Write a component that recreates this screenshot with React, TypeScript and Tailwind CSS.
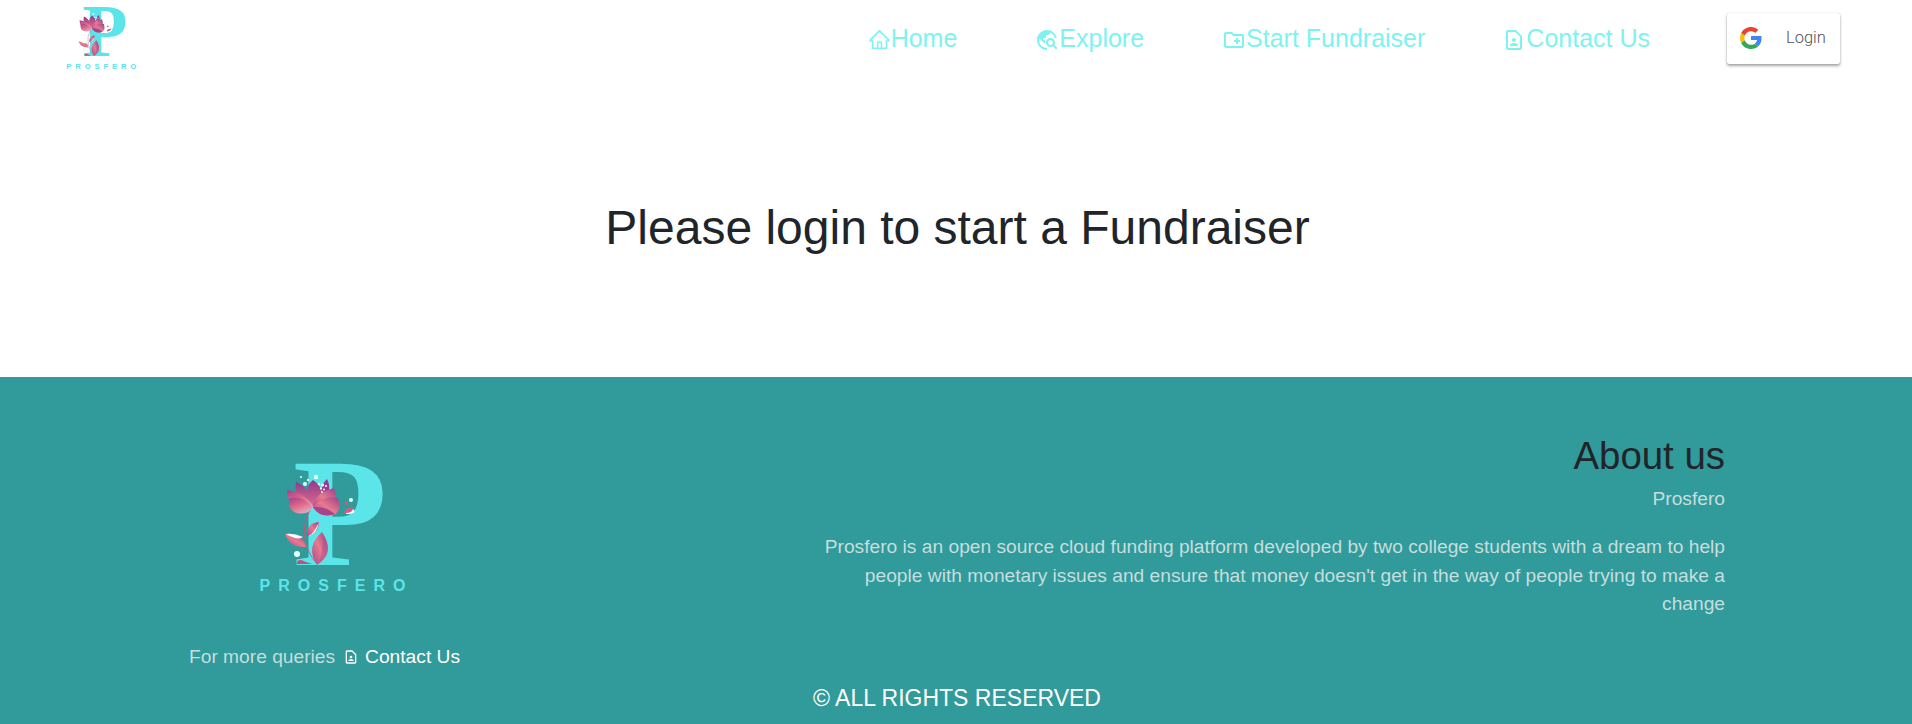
import { AiOutlineHome } from "react-icons/ai";
import { MdTravelExplore, MdOutlineCreateNewFolder, MdOutlineContactPage } from "react-icons/md";
import type { ReactNode } from "react";

function GoogleMark() {
  return (
    <svg viewBox="0 0 18 18" className="size-[22px]" fillRule="evenodd">
      <path d="M9 3.48c1.69 0 2.83.73 3.48 1.34l2.54-2.48C13.46.89 11.43 0 9 0 5.48 0 2.44 2.02.96 4.96l2.91 2.26C4.6 5.05 6.62 3.48 9 3.48z" fill="#EA4335" />
      <path d="M17.64 9.2c0-.74-.06-1.28-.19-1.84H9v3.34h4.96c-.1.83-.64 2.08-1.84 2.92l2.84 2.2c1.7-1.57 2.68-3.88 2.68-6.62z" fill="#4285F4" />
      <path d="M3.88 10.78A5.54 5.54 0 0 1 3.58 9c0-.62.11-1.22.29-1.78L.96 4.96A9.008 9.008 0 0 0 0 9c0 1.45.35 2.82.96 4.04l2.92-2.26z" fill="#FBBC05" />
      <path d="M9 18c2.43 0 4.47-.8 5.96-2.18l-2.84-2.2c-.76.53-1.78.9-3.12.9-2.38 0-4.4-1.57-5.12-3.74L.97 13.04C2.45 15.98 5.48 18 9 18z" fill="#34A853" />
    </svg>
  );
}

function Logo({ className }: { className: string }) {
  return (
    <svg viewBox="0 0 190 170" className={className} overflow="visible" aria-label="Prosfero">
      <defs>
        <linearGradient id="petalA" x1="0" y1="0" x2="0.6" y2="1">
          <stop offset="0" stopColor="#a83c8c" />
          <stop offset="0.6" stopColor="#e2708a" />
          <stop offset="1" stopColor="#dda9c4" />
        </linearGradient>
        <linearGradient id="petalB" x1="1" y1="0" x2="0" y2="1">
          <stop offset="0" stopColor="#9c3f8e" />
          <stop offset="0.5" stopColor="#e87a8c" />
          <stop offset="1" stopColor="#a8458f" />
        </linearGradient>
        <linearGradient id="petalC" x1="0" y1="0" x2="0" y2="1">
          <stop offset="0" stopColor="#8f3a8c" />
          <stop offset="1" stopColor="#e0708c" />
        </linearGradient>
      </defs>
      <text x="53" y="125" fontSize="154" textLength="94" lengthAdjust="spacingAndGlyphs" fill="#5ce5e8" className="font-['Liberation_Serif',serif] font-bold">P</text>
      <path d="M70 70Q62 85 65 100Q68 114 77 124" fill="none" stroke="#c4577c" strokeWidth="0.9" />
      <path d="M81 56Q81 44 87 39Q91 46 88 58Z" fill="#9b3c90" />
      <path d="M60 60Q54 52 56 42Q67 45 74 66Z" fill="url(#petalC)" />
      <path d="M72 67Q61 50 73 40Q88 50 76 68Z" fill="url(#petalC)" />
      <path d="M73 66Q76 52 94 48Q99 61 90 68L76 70Z" fill="url(#petalB)" />
      <path d="M73 66Q64 52 47 50Q48 66 60 70L73 68Z" fill="url(#petalA)" />
      <path d="M73 67Q60 54 49 59Q48 74 62 73.500Q70 73 73 67Z" fill="url(#petalA)" />
      <path d="M73 67Q82 55 98 58Q103 76 88 75.500Q78 75 73 67Z" fill="url(#petalB)" />
      <path d="M73 67Q86 66 95 74Q80 79 73 67Z" fill="#a8448e" />
      <path d="M67 96Q66 83 79 82Q79 93 67 96Z" fill="url(#petalB)" />
      <path d="M68 96Q77 94 79 82Q74 94 68 96Z" fill="#fff" />
      <path d="M66 107Q64 94 45 94Q50 108 66 107Z" fill="url(#petalB)" />
      <path d="M46 94Q58 101 63 97Q54 93 46 94Z" fill="#fff" />
      <path d="M77 125Q65 107 82 92Q96 113 77 125Z" fill="url(#petalB)" />
      <path d="M79 123Q84 110 82 93Q95 113 79 123Z" fill="#b14f92" opacity=".55" />
      <path d="M57 124Q57 117 66 122L72 124Z" fill="#c4507f" />
      <path d="M104 73Q105 67 114 68Q112 75 104 73Z" fill="#d35c82" />
      <path d="M106 73Q112 73 113 69Q118 74 106 74Z" fill="#fff" />
      <path d="M106 65Q102 62 107 61Q109 64 106 65Z" fill="#d9547f" />
      <g fill="#e8ffff">
        <circle cx="76" cy="37" r="2.2" />
        <circle cx="65" cy="44" r="2" />
        <circle cx="61" cy="37" r="1" />
        <circle cx="68" cy="40" r="1.2" />
        <circle cx="79" cy="44" r="1.3" />
        <circle cx="82.500" cy="45" r="1.6" />
        <circle cx="86" cy="46" r="1" />
        <circle cx="81" cy="48.500" r="1.1" />
        <circle cx="84" cy="49.500" r="1" />
        <circle cx="82" cy="52" r="1" />
        <circle cx="111" cy="60" r="2" />
        <circle cx="57" cy="114" r="3" />
      </g>
      <text x="19.500" y="151" fontSize="16" textLength="146" fill="#5ce5e8" className="font-['Liberation_Sans',sans-serif] font-bold">PROSFERO</text>
    </svg>
  );
}

function NavLink({ icon, children }: { icon: ReactNode; children: ReactNode }) {
  return (
    <a className="flex items-center text-[25px] leading-[38px] text-[#7df3f0]">
      <span className="pt-[3px]">{icon}</span>
      {children}
    </a>
  );
}

export default function App() {
  return (
    <div className="flex h-[724px] flex-col overflow-hidden bg-white font-['Liberation_Sans',Arial,sans-serif] text-[#212529]">
      <header className="flex h-[78px] items-center pl-[57px] pr-[72px]">
        <Logo className="-mt-[5px] h-[82px] w-[91px] shrink-0" />
        <nav className="-mt-[2px] ml-auto flex items-center">
          <div className="flex gap-[77px]">
            <div className="flex gap-[78px]">
              <NavLink icon={<AiOutlineHome className="size-[23px]" />}>Home</NavLink>
              <NavLink icon={<MdTravelExplore className="size-[24px]" />}>Explore</NavLink>
              <NavLink icon={<MdOutlineCreateNewFolder className="size-[24px]" />}>Start Fundraiser</NavLink>
            </div>
            <NavLink icon={<MdOutlineContactPage className="size-[24px]" />}>Contact Us</NavLink>
          </div>
          <button className="ml-[77px] flex h-[51px] w-[113px] items-center rounded-xs bg-white pl-[13px] shadow-[0_2px_3px_0_rgba(0,0,0,0.35),0_0_1px_0_rgba(0,0,0,0.3)]">
            <GoogleMark />
            <span className="ml-[24px] font-[Roboto,sans-serif] text-[16.5px] font-light text-[#555555]">Login</span>
          </button>
        </nav>
      </header>
      <main className="flex h-[299px] justify-center pl-[3px] pt-[121px]">
        <h1 className="text-[48px] leading-[58px]">Please login to start a Fundraiser</h1>
      </main>
      <footer className="flex flex-1 flex-col bg-[#319a9a] text-[19.2px] leading-[28.8px] text-[#c5dede]">
        <div className="flex h-[303px] justify-between pl-[189px] pr-[187px]">
          <div className="flex flex-col pt-[63px]">
            <Logo className="ml-[51px] h-[170px] w-[190px]" />
            <p className="mt-[33px] flex items-center">
              For more queries
              <MdOutlineContactPage className="ml-[8px] mr-[6px] size-[16px] text-white" />
              <a className="text-white">Contact Us</a>
            </p>
          </div>
          <div className="w-[912px] pt-[56px] text-right">
            <h2 className="text-[38.4px] leading-[46px] text-[#212529]">About us</h2>
            <p className="mt-[6px]">Prosfero</p>
            <p className="mt-[19px]">
              Prosfero is an open source cloud funding platform developed by two college students with a dream to help people with monetary issues and ensure that money doesn't get in the way of people trying to make a change
            </p>
          </div>
        </div>
        <p className="pl-[2px] pt-px text-center text-[23px] leading-[34px] text-white">© ALL RIGHTS RESERVED</p>
      </footer>
    </div>
  );
}
